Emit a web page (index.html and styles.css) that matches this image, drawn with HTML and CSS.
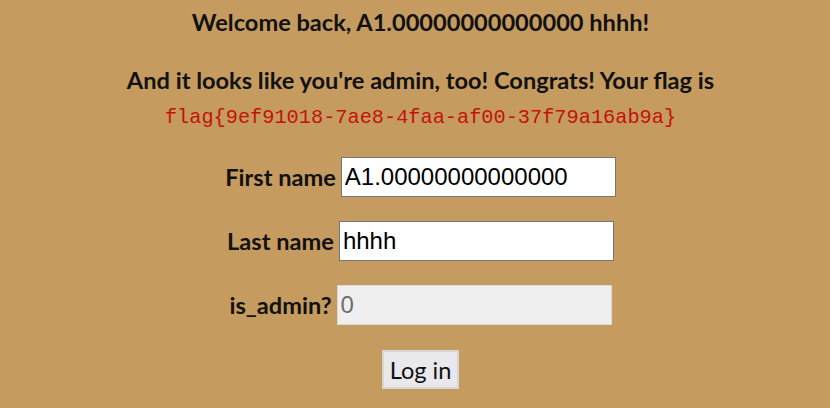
FILE: index.html
```html
<!DOCTYPE html>
<html lang="en">
<head>
  <meta charset="UTF-8" />
  <title>Login</title>
  <link rel="stylesheet" href="styles.css">
</head>
<body>

<div class="container">
  <h2 class="welcome">Welcome back, A1.00000000000000 hhhh!</h2>

  <p class="admin">
    And it looks like you're admin, too! Congrats! Your flag is<br />
    <span class="flag">flag{9ef91018-7ae8-4faa-af00-37f79a16ab9a}</span>
  </p>

  <form class="login">
    <div class="row">
      <label for="first">First name</label>
      <input type="text" id="first" value="A1.00000000000000" />
    </div>
    <div class="row">
      <label for="last">Last name</label>
      <input type="text" id="last" value="hhhh" />
    </div>
    <div class="row">
      <label for="admin">is_admin?</label>
      <input type="text" id="admin" value="0" class="readonly" readonly />
    </div>
    <div class="row">
      <button type="button">Log in</button>
    </div>
  </form>
</div>

</body>
</html>
```

FILE: styles.css
```css
* {
  margin: 0;
  padding: 0;
  box-sizing: border-box;
}

html, body {
  background: #c59b60;
  font-family: Lato, 'Liberation Sans', sans-serif;
  color: #111;
  height: 100%;
}

.container {
  text-align: center;
  padding: 10px 0 0 11px;
}

.welcome {
  font-size: 23.6px;
  font-weight: bold;
  line-height: 24px;
}

.admin {
  margin-top: 29px;
  font-size: 23.6px;
  font-weight: bold;
  line-height: 34px;
}

.flag {
  font-family: 'Liberation Mono', monospace;
  font-weight: normal;
  font-size: 20.3px;
  color: #c4120a;
}

.login {
  margin-top: 22px;
  display: flex;
  flex-direction: column;
  align-items: center;
  gap: 24px;
}

.row {
  display: flex;
  align-items: center;
  gap: 5px;
}

.row label {
  font-size: 23.6px;
  font-weight: bold;
}

.row input {
  width: 275px;
  height: 40px;
  padding: 0 3px;
  border: 1px solid #767676;
  background: #fff;
  font-family: 'Liberation Sans', sans-serif;
  font-size: 24px;
  color: #000;
  outline: none;
}

.row input.readonly {
  background: #efefef;
  border-color: #d8d8d8;
  color: #6d6d6d;
}

.row button {
  margin-top: 1px;
  height: 39px;
  padding: 0 6px;
  font-family: Lato, sans-serif;
  font-size: 23.6px;
  background: #e9e9ed;
  border: 2px solid #d6d6d6;
  color: #111;
  cursor: pointer;
}
```
